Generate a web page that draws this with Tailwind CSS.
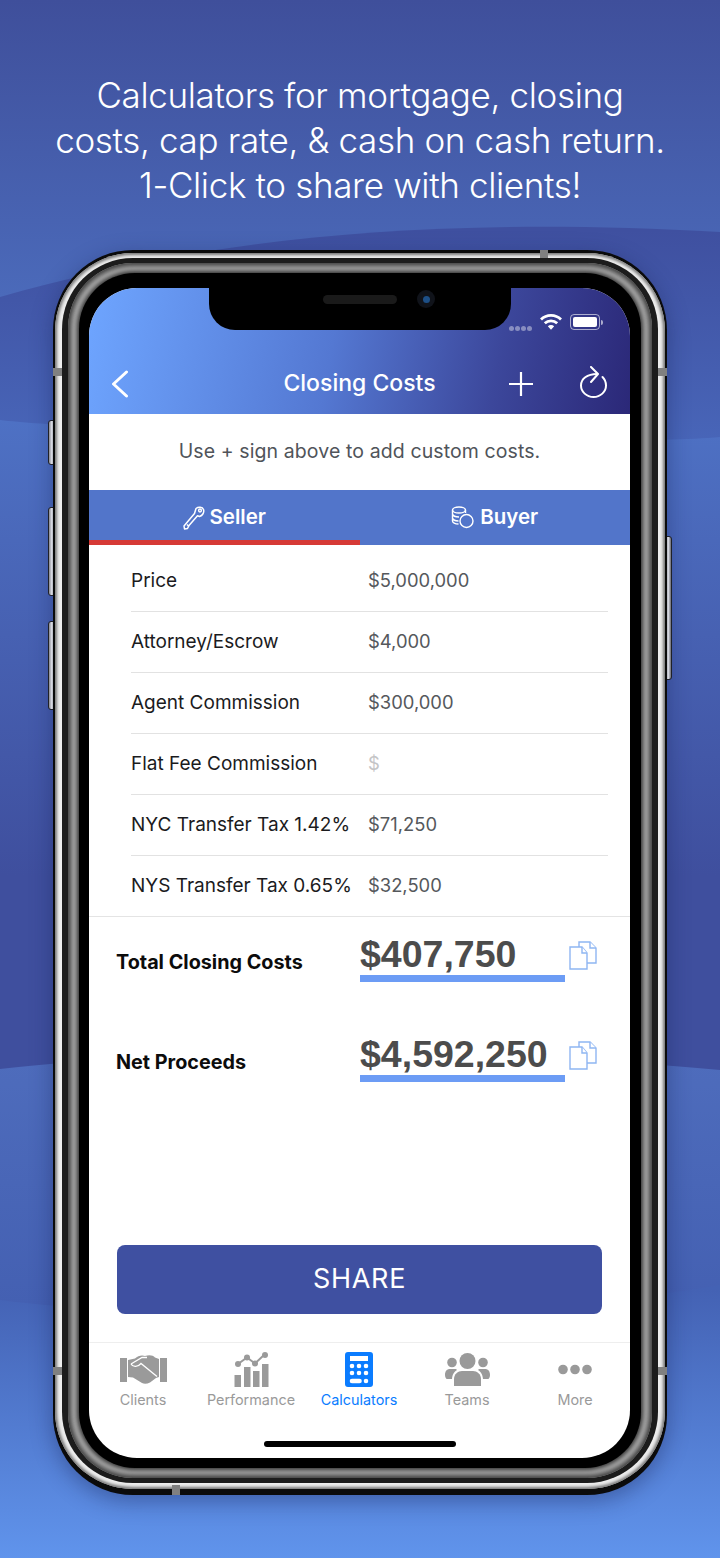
<!DOCTYPE html>
<html lang="en">
<head>
<meta charset="UTF-8" />
<title>Closing Costs</title>
<script src="https://cdn.jsdelivr.net/npm/@tailwindcss/browser@4"></script>
</head>
<body class="font-['Inter',sans-serif]">
<div class="relative w-[720px] h-[1558px] overflow-hidden bg-[#3f4f9b]">

  <!-- background waves -->
  <svg class="absolute inset-0" width="720" height="1558" viewBox="0 0 720 1558" fill="none">
    <defs>
      <linearGradient id="b1" gradientUnits="userSpaceOnUse" x1="0" y1="0" x2="0" y2="297"><stop stop-color="#3f4f9b"/><stop offset="1" stop-color="#4b6aba"/></linearGradient>
      <linearGradient id="b2" gradientUnits="userSpaceOnUse" x1="0" y1="230" x2="0" y2="440"><stop stop-color="#3f50a0"/><stop offset="1" stop-color="#4865b8"/></linearGradient>
      <linearGradient id="b3" gradientUnits="userSpaceOnUse" x1="0" y1="420" x2="0" y2="1070"><stop stop-color="#4e71c4"/><stop offset="0.7" stop-color="#3f4f9e"/><stop offset="1" stop-color="#3f4f9e"/></linearGradient>
      <linearGradient id="b4" gradientUnits="userSpaceOnUse" x1="0" y1="1060" x2="0" y2="1305"><stop stop-color="#4e6cbc"/><stop offset="1" stop-color="#4460b2"/></linearGradient>
      <linearGradient id="b5" gradientUnits="userSpaceOnUse" x1="0" y1="1290" x2="0" y2="1558"><stop stop-color="#4462b4"/><stop offset="1" stop-color="#6094ec"/></linearGradient>
    </defs>
    <rect width="720" height="1558" fill="url(#b1)"/>
    <path d="M0 297C200 240 420 215 720 232V1558H0Z" fill="url(#b2)"/>
    <path d="M0 420C100 432 600 448 720 437V1558H0Z" fill="url(#b3)"/>
    <path d="M0 1069C150 1050 520 1050 720 1070V1558H0Z" fill="url(#b4)"/>
    <path d="M0 1300C200 1325 520 1320 720 1285V1558H0Z" fill="url(#b5)"/>
  </svg>

  <h1 class="relative pt-[73px] text-center text-[35px] leading-[45px] tracking-[-0.35px] font-light text-white">
    Calculators for mortgage, closing<br>costs, cap rate, &amp; cash on cash return.<br>1-Click to share with clients!
  </h1>

  <!-- phone -->
  <div class="relative mt-[42px] ml-[53px] w-[614px] h-[1245px]">
    <!-- side buttons -->
    <div class="absolute left-[-5px] top-[170px] w-[7px] h-[45px] rounded-l-[3px] bg-gradient-to-r from-[#999] via-[#fff] to-[#ccc] border border-[#222]"></div>
    <div class="absolute left-[-5px] top-[257px] w-[7px] h-[89px] rounded-l-[3px] bg-gradient-to-r from-[#999] via-[#fff] to-[#ccc] border border-[#222]"></div>
    <div class="absolute left-[-5px] top-[371px] w-[7px] h-[89px] rounded-l-[3px] bg-gradient-to-r from-[#999] via-[#fff] to-[#ccc] border border-[#222]"></div>
    <div class="absolute right-[-5px] top-[286px] w-[7px] h-[144px] rounded-r-[3px] bg-gradient-to-r from-[#ccc] via-[#fff] to-[#777] border border-[#222]"></div>

    <div class="relative h-full rounded-[80px] bg-[#0b0b0b] pt-[3px] px-[2px] pb-[6px] shadow-[0_6px_22px_rgba(20,30,80,0.4)]">
      <div class="h-full rounded-[78px] bg-[#ededed] pt-[5px] px-[7px] pb-[6px] shadow-[inset_0_0_3px_2px_#777]">
        <div class="h-full rounded-[71px] bg-[#1c1c1c] pt-[5px] px-[6px] pb-[5px]">
          <div class="h-full rounded-[65px] bg-[#a8a8a8] pt-[10px] px-[11px] pb-[10px] shadow-[inset_0_0_4px_3px_#444]">
            <div class="h-full rounded-[56px] bg-black pt-[15px] pl-[10px] pr-[11px] pb-[10px] shadow-[0_0_4px_2px_#333]">

              <!-- screen -->
              <div class="relative flex flex-col h-full rounded-[48px] overflow-hidden bg-white">
                <header class="relative h-[126px] shrink-0 bg-[linear-gradient(100deg,#6ea5ff_0%,#5478d2_45%,#3c479b_75%,#2b2878_100%)] text-white">
                  <!-- notch -->
                  <div class="absolute left-[120px] top-0 w-[302px] h-[42px] rounded-b-[26px] bg-black">
                    <div class="absolute left-[114px] top-[7px] w-[74px] h-[9px] rounded-full bg-[#1a1a1a]"></div>
                    <div class="absolute left-[208px] top-[2px] w-[18px] h-[18px] rounded-full bg-[#10131a] flex items-center justify-center"><div class="w-[7px] h-[7px] rounded-full bg-[#1d4f86]"></div></div>
                  </div>
                  <!-- status bar -->
                  <div class="absolute right-[27px] top-[25px] flex items-end gap-[8px]">
                    <div class="flex gap-[1px] mb-[-1px]">
                      <span class="w-[5px] h-[5px] rounded-full bg-white/40"></span><span class="w-[5px] h-[5px] rounded-full bg-white/40"></span><span class="w-[5px] h-[5px] rounded-full bg-white/40"></span><span class="w-[5px] h-[5px] rounded-full bg-white/40"></span>
                    </div>
                    <svg width="22" height="17" viewBox="0 0 22 17" fill="none" stroke="#fff" stroke-width="2.800"><path d="M1 6.500C6.500 1 15.500 1 21 6.500"/><path d="M4.800 10.300C8.300 7 13.700 7 17.200 10.300"/><path d="M11 16.800L7.800 13.300C9.700 11.700 12.300 11.700 14.200 13.300Z" fill="#fff" stroke="none"/></svg>
                    <div class="flex items-center gap-[1px]">
                      <div class="w-[30px] h-[16px] rounded-[4px] border border-white/60 p-[2px]"><div class="h-full rounded-[2px] bg-white"></div></div>
                      <div class="w-[2px] h-[5px] rounded-r bg-white/60"></div>
                    </div>
                  </div>
                  <!-- nav -->
                  <div class="absolute inset-x-0 bottom-0 h-[62px] flex items-center justify-center">
                    <span class="text-[23px] font-medium">Closing Costs</span>
                    <svg class="absolute left-[22px] top-[18px]" width="18" height="28" viewBox="0 0 18 28" fill="none" stroke="#fff" stroke-width="3" stroke-linecap="round" stroke-linejoin="round"><path d="M15.500 2L2.500 14L15.500 26"/></svg>
                    <svg class="absolute left-[420px] top-[20px]" width="24" height="24" viewBox="0 0 24 24" fill="none" stroke="#fff" stroke-width="2.200"><path d="M12 0V24M0 12H24"/></svg>
                    <svg class="absolute left-[491px] top-[14px]" width="27" height="32" viewBox="0 0 27 32" fill="none" stroke="#fff" stroke-width="2" stroke-linecap="round" stroke-linejoin="round"><path d="M17 8C7 8 1 13 1 19.500A12.500 11.500 0 0 0 26 19.500C26 15.500 24.500 13 22.500 11"/><path d="M11 1L18 8L11 16"/></svg>
                  </div>
                </header>

                <p class="h-[76px] shrink-0 flex items-center justify-center text-[19.5px] tracking-[0.1px] text-[#50545a]">Use + sign above to add custom costs.</p>

                <!-- tabs -->
                <div class="relative flex h-[55px] shrink-0 bg-[#5275ca] text-white text-[20.5px] font-semibold">
                  <div class="flex-1 flex items-center justify-center gap-[5px]">
                    <svg width="22" height="24" viewBox="0 0 22 24" fill="none" stroke="#fff" stroke-width="1.500" stroke-linejoin="round"><path d="M13 2.500C15.500.500 19.500 1 20.500 3.500C21.500 6.500 19.500 9.500 16.500 10.500L14.500 9.800L6 19.500L4.500 22.500L1.500 23L1 20L11.500 7.500Z"/><circle cx="17" cy="4.500" r="1.400"/><path d="M4 18.500L6 20.500"/></svg>
                    <span>Seller</span>
                  </div>
                  <div class="flex-1 flex items-center justify-center gap-[6px]">
                    <svg width="23" height="23" viewBox="0 0 23 23" fill="none" stroke="#fff" stroke-width="1.400"><ellipse cx="8" cy="4" rx="6.500" ry="3"/><path d="M1.500 4V15C1.500 16.500 4 18 7.500 18M14.500 4V7M1.500 8C2 10 5 11 8 11M1.500 12C2 14 5 15 7.500 15"/><circle cx="15.500" cy="15" r="6.500"/></svg>
                    <span>Buyer</span>
                  </div>
                  <div class="absolute left-0 bottom-0 w-1/2 h-[5px] bg-[#d63a36]"></div>
                </div>

                <!-- cost rows -->
                <div class="pl-[42px] pr-[22px] pt-[6px] text-[19px] text-[#1b1b1d] border-b border-[#e4e4e4]">
                  <div class="flex items-center h-[61px] border-b border-[#e2e2e2]"><span class="w-[237px]">Price</span><span class="text-[18.4px] text-[#55585c]">$5,000,000</span></div>
                  <div class="flex items-center h-[61px] border-b border-[#e2e2e2]"><span class="w-[237px]">Attorney/Escrow</span><span class="text-[18.4px] text-[#55585c]">$4,000</span></div>
                  <div class="flex items-center h-[61px] border-b border-[#e2e2e2]"><span class="w-[237px]">Agent Commission</span><span class="text-[18.4px] text-[#55585c]">$300,000</span></div>
                  <div class="flex items-center h-[61px] border-b border-[#e2e2e2]"><span class="w-[237px]">Flat Fee Commission</span><span class="text-[18.4px] text-[#c4c4c6]">$</span></div>
                  <div class="flex items-center h-[61px] border-b border-[#e2e2e2]"><span class="w-[237px]">NYC Transfer Tax 1.42%</span><span class="text-[18.4px] text-[#55585c]">$71,250</span></div>
                  <div class="flex items-center h-[60px]"><span class="w-[237px]">NYS Transfer Tax 0.65%</span><span class="text-[18.4px] text-[#55585c]">$32,500</span></div>
                </div>

                <!-- totals -->
                <div class="flex pl-[27px] pt-[17px] h-[100px]">
                  <span class="w-[244px] pt-[14px] text-[19.8px] font-bold text-[#0c0c0c]">Total Closing Costs</span>
                  <div class="w-[205px] h-[48px] border-b-[7px] border-[#6c9cf5] font-['Liberation_Sans',sans-serif] text-[37.5px] leading-[41px] font-bold text-[#4c4c4c]">$407,750</div>
                  <svg class="ml-[4px] mt-[7px]" width="28" height="29" viewBox="0 0 28 29" fill="#fff" stroke="#8fb6f2" stroke-width="1.400"><path d="M10 1H21L27 7V22H10Z"/><path d="M21 1V7H27"/><path d="M1 6H13L18 12V28H1Z"/><path d="M13 6V12H18"/></svg>
                </div>
                <div class="flex pl-[27px] pt-[17px] h-[100px]">
                  <span class="w-[244px] pt-[14px] text-[19.8px] font-bold text-[#0c0c0c]">Net Proceeds</span>
                  <div class="w-[205px] h-[48px] border-b-[7px] border-[#6c9cf5] font-['Liberation_Sans',sans-serif] text-[37.5px] leading-[41px] font-bold text-[#4c4c4c] whitespace-nowrap">$4,592,250</div>
                  <svg class="ml-[4px] mt-[7px]" width="28" height="29" viewBox="0 0 28 29" fill="#fff" stroke="#8fb6f2" stroke-width="1.400"><path d="M10 1H21L27 7V22H10Z"/><path d="M21 1V7H27"/><path d="M1 6H13L18 12V28H1Z"/><path d="M13 6V12H18"/></svg>
                </div>

                <div class="flex-1 flex flex-col justify-end pl-[28px] pr-[28px]">
                  <button class="h-[69px] mb-[28px] rounded-[8px] bg-[#3f50a1] text-white text-[27px] tracking-[0.7px]">SHARE</button>
                </div>

                <!-- tab bar -->
                <nav class="h-[116px] shrink-0 border-t border-[#eeeeee] pt-[8px] flex text-[14.4px] leading-[18px] text-[#9a9a9a]">
                  <div class="w-[108px] flex flex-col items-center">
                    <div class="h-[36px] flex items-center">
                      <svg width="47" height="30" viewBox="0 0 47 30" fill="#9a9a9a"><path d="M0 4H7V28H0Z M40 4H47V28H40Z"/><path d="M8 6L15 4.500C18 1 23 1 25 2C29 .5 33 1 35 3.500L39 5V23L36 24L30 28.500C27 30 24 30 22 29L13 23.500L8 23Z"/><path d="M11 10L22 3.500H27M11 10C13 13.500 18 13 21 9.500L37 22.500" fill="none" stroke="#fff" stroke-width="1.300"/></svg>
                    </div>
                    <span class="mt-[4px]">Clients</span>
                  </div>
                  <div class="w-[108px] flex flex-col items-center">
                    <div class="h-[36px] flex items-center">
                      <svg width="35" height="35" viewBox="0 0 35 35" fill="#9a9a9a"><path d="M0.500 23H7V35H0.500Z M10 15H16.500V35H10Z M19 19H25.500V35H19Z M28 12H34.500V35H28Z"/><path d="M4 12L13 5.500L21 11.500L30 3" fill="none" stroke="#9a9a9a" stroke-width="2"/><circle cx="4" cy="12" r="3"/><circle cx="13" cy="5.500" r="3"/><circle cx="21" cy="11.500" r="3"/><circle cx="31" cy="3" r="3"/></svg>
                    </div>
                    <span class="mt-[4px]">Performance</span>
                  </div>
                  <div class="w-[108px] flex flex-col items-center text-[#0a7cff]">
                    <div class="h-[36px] flex items-center">
                      <svg width="28" height="35" viewBox="0 0 28 35" fill="#0a7cff"><path fill-rule="evenodd" d="M3 0H25A3 3 0 0 1 28 3V32A3 3 0 0 1 25 35H3A3 3 0 0 1 0 32V3A3 3 0 0 1 3 0ZM5 4V9H23V4ZM4.700 14A2.300 2.300 0 1 0 9.300 14A2.300 2.300 0 1 0 4.700 14ZM11.700 14A2.300 2.300 0 1 0 16.300 14A2.300 2.300 0 1 0 11.700 14ZM18.700 14A2.300 2.300 0 1 0 23.300 14A2.300 2.300 0 1 0 18.700 14ZM4.700 21A2.300 2.300 0 1 0 9.300 21A2.300 2.300 0 1 0 4.700 21ZM11.700 21A2.300 2.300 0 1 0 16.300 21A2.300 2.300 0 1 0 11.700 21ZM18.700 21A2.300 2.300 0 1 0 23.300 21A2.300 2.300 0 1 0 18.700 21ZM7 26.700H14.500A2.300 2.300 0 0 1 14.500 31.300H7A2.300 2.300 0 0 1 7 26.700ZM18.700 29A2.300 2.300 0 1 0 23.300 29A2.300 2.300 0 1 0 18.700 29Z"/></svg>
                    </div>
                    <span class="mt-[4px]">Calculators</span>
                  </div>
                  <div class="w-[108px] flex flex-col items-center">
                    <div class="h-[36px] flex items-center">
                      <svg width="45" height="33" viewBox="0 0 45 33" fill="#9a9a9a"><circle cx="22.500" cy="8" r="8"/><circle cx="7" cy="9.500" r="4.800"/><circle cx="38" cy="9.500" r="4.800"/><path d="M9 33V26C9 21 13 18 17 18H28C32 18 36 21 36 26V33Z"/><path d="M0 22C0 18 2 16 5 16H11L12 17C9 19 7.500 21 7 26L2 26C1 26 0 24 0 22Z"/><path d="M45 22C45 18 43 16 40 16H34L33 17C36 19 37.500 21 38 26L43 26C44 26 45 24 45 22Z"/></svg>
                    </div>
                    <span class="mt-[4px]">Teams</span>
                  </div>
                  <div class="w-[108px] flex flex-col items-center">
                    <div class="h-[36px] flex items-center">
                      <svg width="34" height="11" viewBox="0 0 34 11" fill="#9a9a9a"><circle cx="5" cy="5.500" r="4.800"/><circle cx="17" cy="5.500" r="4.800"/><circle cx="29" cy="5.500" r="4.800"/></svg>
                    </div>
                    <span class="mt-[4px]">More</span>
                  </div>
                </nav>
                <div class="absolute left-[175px] bottom-[11px] w-[192px] h-[6px] rounded-full bg-black"></div>
              </div>

            </div>
          </div>
        </div>
      </div>
    </div>

    <!-- antenna bands -->
    <div class="absolute left-0 top-[118px] w-[9px] h-[8px] bg-[#808080]"></div>
    <div class="absolute right-0 top-[118px] w-[9px] h-[8px] bg-[#808080]"></div>
    <div class="absolute left-0 top-[1117px] w-[9px] h-[8px] bg-[#808080]"></div>
    <div class="absolute right-0 top-[1117px] w-[9px] h-[8px] bg-[#808080]"></div>
    <div class="absolute left-[487px] top-0 w-[8px] h-[8px] bg-[#808080]"></div>
    <div class="absolute left-[119px] bottom-0 w-[8px] h-[10px] bg-[#808080]"></div>
  </div>
</div>
</body>
</html>
